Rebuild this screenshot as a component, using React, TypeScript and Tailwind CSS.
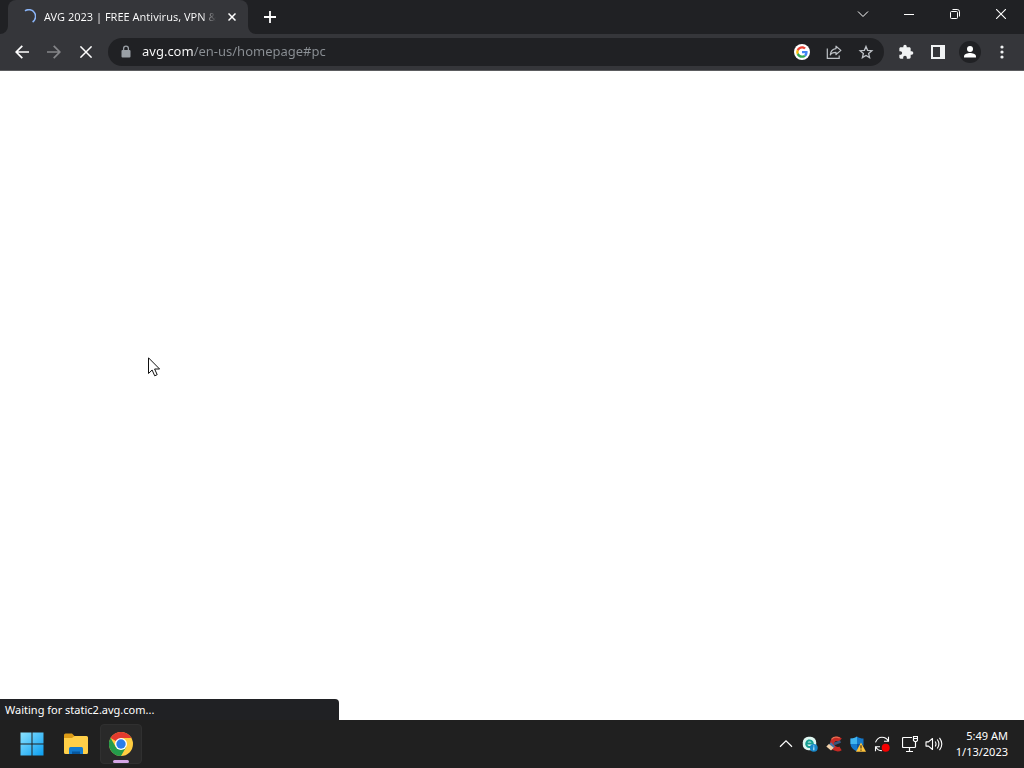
import type { ReactNode } from 'react';

const iconButton = 'flex h-7 w-7 shrink-0 items-center justify-center rounded-full hover:bg-white/10';
const windowButton = 'flex h-7 w-[46px] items-center justify-center text-white hover:bg-white/10';
const taskButton = 'relative flex h-10 w-10 items-center justify-center rounded hover:bg-white/5';
const trayButton = 'flex h-10 w-6 items-center justify-center rounded text-white hover:bg-white/5';

type ButtonProps = { label: string; className: string; children: ReactNode };

function Button({ label, className, children }: ButtonProps) {
  return (
    <button type="button" aria-label={label} className={className}>
      {children}
    </button>
  );
}

function TabStrip() {
  return (
    <div className="flex h-[34px] items-start bg-[#202124]">
      {/* Outward curves where the active tab meets the toolbar. */}
      <svg width="8" height="8" viewBox="0 0 8 8" className="shrink-0 self-end">
        <path d="M8 0v8H0a8 8 0 0 0 8-8z" fill="#35363a" />
      </svg>
      <div className="flex h-full w-60 items-center gap-2 rounded-t-lg bg-[#35363a] pr-2 pl-3">
        <svg width="16" height="16" viewBox="0 0 16 16" fill="none" className="shrink-0">
          <path d="M5 1.8A6.7 6.7 0 0 1 12.600 13" stroke="#8ab4f8" strokeWidth="1.6" />
        </svg>
        <span className="min-w-0 flex-1 bg-linear-to-r from-white from-92% to-transparent bg-clip-text text-[11px] whitespace-nowrap text-transparent">
          AVG 2023 | FREE Antivirus, VPN &amp;
        </span>
        <Button label="Close tab" className="flex h-4 w-4 shrink-0 items-center justify-center rounded-full text-white">
          <svg width="8" height="8" viewBox="0 0 8 8" stroke="currentColor" strokeWidth="1.5">
            <path d="M.5.5l7 7M7.5.5l-7 7" />
          </svg>
        </Button>
      </div>
      <svg width="8" height="8" viewBox="0 0 8 8" className="shrink-0 self-end">
        <path d="M0 0v8h8a8 8 0 0 1-8-8z" fill="#35363a" />
      </svg>
      <Button label="New tab" className="flex h-[34px] w-7 items-center justify-center text-white">
        <svg width="12" height="12" viewBox="0 0 12 12" stroke="currentColor" strokeWidth="1.8">
          <path d="M6 0v12M0 6h12" />
        </svg>
      </Button>
      <div className="ml-auto flex">
        <Button label="Search tabs" className={windowButton}>
          <svg width="12" height="12" viewBox="0 0 12 12" fill="none" stroke="currentColor">
            <path d="M1 3.5l5 5 5-5" />
          </svg>
        </Button>
        <Button label="Minimize" className={windowButton}>
          <svg width="10" height="10" viewBox="0 0 10 10" stroke="currentColor">
            <path d="M0 5.5h10" />
          </svg>
        </Button>
        <Button label="Restore" className={windowButton}>
          <svg width="10" height="10" viewBox="0 0 10 10" fill="none" stroke="currentColor">
            <rect x=".5" y="2.5" width="7" height="7" rx="1" />
            <path d="M2.5.5h4.7a2.3 2.3 0 0 1 2.3 2.3v4.7" />
          </svg>
        </Button>
        <Button label="Close" className={windowButton}>
          <svg width="10" height="10" viewBox="0 0 10 10" stroke="currentColor" strokeWidth="1.1">
            <path d="M0 0l10 10M10 0L0 10" />
          </svg>
        </Button>
      </div>
    </div>
  );
}

function AddressBar() {
  return (
    <div className="mx-1 flex h-7 min-w-0 flex-1 items-center gap-1 rounded-full bg-[#202124] pr-1 pl-3 text-[#bdc1c6]">
      <svg width="12" height="14" viewBox="0 0 12 14" fill="none" className="mr-1.5 shrink-0">
        <rect x="1.5" y="5" width="9" height="7.5" rx="1" fill="#9aa0a6" />
        <path d="M3.6 5V3.6a2.4 2.4 0 0 1 4.8 0V5" stroke="#9aa0a6" strokeWidth="1.3" />
      </svg>
      {/* The host is bright and the path is dimmed, split at the end of the host name. */}
      <input
        type="text"
        aria-label="Address and search bar"
        defaultValue="avg.com/en-us/homepage#pc"
        className="min-w-0 flex-1 bg-linear-to-r from-white from-[51px] to-[#8b9095] to-[51px] bg-clip-text text-[13px] text-transparent outline-none"
      />
      <Button label="Search with Google" className={iconButton}>
        <svg width="16" height="16" viewBox="0 0 48 48">
          <circle cx="24" cy="24" r="24" fill="#fff" />
          <g transform="translate(6.5 6.5) scale(.73)">
            <path fill="#ea4335" d="M24 9.5c3.54 0 6.71 1.22 9.21 3.6l6.85-6.85C35.9 2.38 30.47 0 24 0 14.62 0 6.51 5.38 2.56 13.22l7.98 6.19C12.43 13.72 17.74 9.5 24 9.5z" />
            <path fill="#4285f4" d="M46.98 24.55c0-1.57-.15-3.09-.38-4.55H24v9.02h12.94c-.58 2.96-2.26 5.48-4.78 7.18l7.73 6c4.51-4.18 7.09-10.36 7.09-17.65z" />
            <path fill="#fbbc05" d="M10.53 28.59a14.5 14.5 0 0 1 0-9.18l-7.98-6.19a24 24 0 0 0 0 21.56l7.98-6.19z" />
            <path fill="#34a853" d="M24 48c6.48 0 11.93-2.13 15.89-5.81l-7.73-6c-2.15 1.45-4.92 2.3-8.16 2.3-6.26 0-11.57-4.22-13.47-9.91l-7.98 6.19C6.51 42.62 14.62 48 24 48z" />
          </g>
        </svg>
      </Button>
      <Button label="Share this page" className={iconButton}>
        <svg width="16" height="16" viewBox="0 0 16 16" fill="none" stroke="currentColor" strokeWidth="1.2">
          <path d="M1.3 4.5v9.8h11.9v-2.8" />
          <path d="M10 2.2l4.9 4.2L10 10.5V8.3c-2.9 0-4.8.8-5.7 2.6.3-3.4 2.2-5.9 5.7-6.3z" strokeLinejoin="round" />
        </svg>
      </Button>
      <Button label="Bookmark this tab" className={iconButton}>
        <svg width="16" height="16" viewBox="0 0 16 16" fill="none" stroke="currentColor" strokeWidth="1.3">
          <path d="M8 2.4l1.6 3.9 4.3.4-3.300 2.800 1 4.100L8 11.400l-3.600 2.200 1-4.100-3.300-2.800 4.300-.4z" />
        </svg>
      </Button>
    </div>
  );
}

function Toolbar() {
  return (
    <div className="flex h-[37px] items-center gap-1 border-b border-[#5b5c5f] bg-[#35363a] px-2 text-white">
      <Button label="Back" className={iconButton}>
        <svg width="14" height="14" viewBox="0 0 14 14" fill="none" stroke="currentColor" strokeWidth="1.7">
          <path d="M14 7H1.5M7.3.8L1.2 7l6.1 6.2" />
        </svg>
      </Button>
      <Button label="Forward" className={`${iconButton} text-[#858689]`}>
        <svg width="14" height="14" viewBox="0 0 14 14" fill="none" stroke="currentColor" strokeWidth="1.7">
          <path d="M0 7h12.5M6.7.8L12.8 7l-6.1 6.2" />
        </svg>
      </Button>
      <Button label="Stop loading" className={iconButton}>
        <svg width="12" height="12" viewBox="0 0 12 12" stroke="currentColor" strokeWidth="1.5">
          <path d="M.4.4l11.2 11.2M11.6.4L.4 11.6" />
        </svg>
      </Button>
      <AddressBar />
      <Button label="Extensions" className={iconButton}>
        <svg width="16" height="16" viewBox="0 0 24 24" fill="#f1f3f4">
          <path d="M20.5 11H19V7c0-1.1-.9-2-2-2h-4V3.5a2.5 2.5 0 0 0-5 0V5H4c-1.1 0-1.99.9-1.99 2v3.8H3.5c1.49 0 2.7 1.21 2.7 2.7s-1.21 2.7-2.7 2.7H2V20c0 1.1.9 2 2 2h3.8v-1.5c0-1.49 1.21-2.7 2.7-2.7s2.7 1.21 2.7 2.7V22H17c1.1 0 2-.9 2-2v-4h1.5a2.5 2.5 0 0 0 0-5z" />
        </svg>
      </Button>
      <Button label="Side panel" className={iconButton}>
        <svg width="14" height="14" viewBox="0 0 14 14">
          <path fillRule="evenodd" fill="#f1f3f4" d="M0 0h14v14H0zM2 2v10h7V2z" />
        </svg>
      </Button>
      <Button label="Profile" className={iconButton}>
        <svg width="22" height="22" viewBox="0 0 22 22">
          <circle cx="11" cy="11" r="11" fill="#202124" />
          <circle cx="11" cy="7.9" r="3" fill="#fff" />
          <path d="M5 16.5v-1.3c0-2.2 3.8-3.2 6-3.2s6 1 6 3.2v1.3z" fill="#fff" />
        </svg>
      </Button>
      <Button label="Menu" className={iconButton}>
        <svg width="4" height="14" viewBox="0 0 4 14" fill="#f1f3f4">
          <circle cx="2" cy="2" r="1.6" />
          <circle cx="2" cy="7" r="1.6" />
          <circle cx="2" cy="12" r="1.6" />
        </svg>
      </Button>
    </div>
  );
}

function Tray() {
  return (
    <div className="flex items-center">
      <Button label="Show hidden icons" className={trayButton}>
        <svg width="14" height="14" viewBox="0 0 14 14" fill="none" stroke="currentColor" strokeWidth="1.2">
          <path d="M1 9.7l6-5.8 6 5.8" />
        </svg>
      </Button>
      <Button label="Security agent" className={trayButton}>
        <svg width="16" height="16" viewBox="0 0 16 16" fill="none">
          <rect x=".8" y=".8" width="13.4" height="13.4" rx="5.5" fill="#dff7f1" />
          <path d="M4.3 7.6h6.5a3.3 3.3 0 1 0-1 2.5" stroke="#159e91" strokeWidth="2" />
          <circle cx="11.8" cy="11.8" r="3.9" fill="#1687c9" />
          <path d="M11.8 9.5v1M11.8 11.2v3" stroke="#b9e7fa" strokeWidth="1.2" />
        </svg>
      </Button>
      <Button label="CCleaner" className={trayButton}>
        <svg width="16" height="16" viewBox="0 0 16 16" fill="none">
          <path d="M14.3 4.2C11.5 1.600 6.400 2.500 6.200 7.500c-.1 5.200 5.200 6.800 8.300 4.800" stroke="#c52a24" strokeWidth="4.4" />
          <path d="M5.500 3.300C7 1.400 10.500.7 13.800 2" stroke="#e76c50" strokeWidth="1.2" />
          <path d="M8 8l6.500-2.500" stroke="#38577d" strokeWidth="2.5" />
          <path d="M5.200 6.200l3.800 4.200-2.300 2.400-4-4.300z" fill="#4674a6" />
          <path d="M2.900 8.100l4.800 3.600-2.700 2.700L.3 10.400z" fill="#f1d0a9" />
        </svg>
      </Button>
      <Button label="Windows Security" className={trayButton}>
        <svg width="16" height="16" viewBox="0 0 16 16">
          <path d="M7 .5c1.9 1.4 4 2 6.5 2v4.900c0 3.900-2.900 6.300-6.500 7.900C3.400 13.700.5 11.300.5 7.400V2.500c2.500 0 4.600-.6 6.500-2z" fill="#1479cc" />
          <path d="M7 .5v7.400H.5V2.500c2.500 0 4.600-.6 6.500-2z" fill="#40b5ef" />
          <path d="M7 7.900h6.500c-.2 3.700-3 5.900-6.500 7.400z" fill="#0c57a4" />
          <path d="M11 6.500l5 9.300H6z" fill="#ffc33b" />
          <path d="M11 9.300v3.300M11 13.500v1.200" stroke="#463518" strokeWidth="1.2" />
        </svg>
      </Button>
      <Button label="Windows Update" className={trayButton}>
        <svg width="16" height="16" viewBox="0 0 16 16" fill="none" stroke="currentColor" strokeWidth="1.1">
          <path d="M1.5 6.4C2.7 2.9 5 1.2 8 1.2c3 0 5.1 1.5 6.300 3.800M14.500.8v4.500H10" />
          <path d="M1.5 15.200v-4.500H6M1.800 11c1.200 2.300 3.200 3.800 6.200 3.800" />
          <circle cx="11.7" cy="11.7" r="4" fill="#f50000" stroke="none" />
        </svg>
      </Button>
      <Button label="Network" className={`${trayButton} ml-1`}>
        <svg width="16" height="16" viewBox="0 0 16 16" fill="none" stroke="currentColor" strokeWidth="1.2">
          <path d="M10 1.5H1.5a1 1 0 0 0-1 1v8a1 1 0 0 0 1 1h11a1 1 0 0 0 1-1V6M4 15.500h7M7.500 11.500v4" />
          <path d="M11.5.5h4v4l-1 1h-2l-1-1zM11.5 2.500h4" />
        </svg>
      </Button>
      <Button label="Volume" className={trayButton}>
        <svg width="18" height="16" viewBox="0 0 18 16" fill="none" stroke="currentColor" strokeWidth="1.1">
          <path d="M1 5.900h2.500L7.500 2.500v11l-4-3.400H1z" strokeLinejoin="round" />
          <path d="M10.200 5.500q1.600 2.500 0 5M12.300 3.500q3.200 4.500 0 9M14.500 1.800q4.600 6.200 0 12.400" />
        </svg>
      </Button>
      <button type="button" className="h-10 pr-4 pl-2.5 text-right text-[11px] leading-4 text-white">
        <span className="block">5:49 AM</span>
        <span className="block">1/13/2023</span>
      </button>
    </div>
  );
}

function Taskbar() {
  return (
    <footer className="flex h-12 items-center justify-between bg-[#202020] pl-3">
      <nav aria-label="Taskbar" className="flex gap-1">
        <Button label="Start" className={taskButton}>
          <svg width="24" height="24" viewBox="0 0 24 24">
            <defs>
              <linearGradient id="win" x1="0" y1="0" x2="1" y2="1">
                <stop offset="0" stopColor="#8be2ff" />
                <stop offset="1" stopColor="#0a9df0" />
              </linearGradient>
            </defs>
            <path fill="url(#win)" d="M.5.5h11v11H.5zM12.5.5h11v11h-11zM.5 12.5h11v11H.5zM12.5 12.5h11v11h-11z" />
          </svg>
        </Button>
        <Button label="File Explorer" className={taskButton}>
          <svg width="24" height="24" viewBox="0 0 24 24">
            <path d="M0 3a1.500 1.500 0 0 1 1.500-1.500H8L10.500 4v4H0z" fill="#dc9b16" />
            <path d="M0 6h8l2.500-2h12A1.500 1.500 0 0 1 24 5.500v15a1.500 1.500 0 0 1-1.500 1.500h-21A1.500 1.500 0 0 1 0 20.500z" fill="#ffcf48" />
            <path d="M5 22v-5.500A1.500 1.500 0 0 1 6.500 15h11a1.500 1.500 0 0 1 1.500 1.500V22z" fill="#127bd0" />
            <path d="M8 22v-2.500h8V22z" fill="#07579e" />
          </svg>
        </Button>
        <button
          type="button"
          aria-label="Google Chrome"
          className="relative flex h-10 w-[42px] items-center justify-center rounded border border-[#303030] bg-[#292929]"
        >
          <svg width="24" height="24" viewBox="0 0 24 24">
            <circle cx="12" cy="12" r="12" fill="#ffcd40" />
            <path d="M12 12L1.600 6A12 12 0 0 1 22.400 6H12z" fill="#e33b2e" />
            <path d="M1.600 6A12 12 0 0 0 12 24l5.200-9L12 12 6.800 15z" fill="#249b4b" />
            <circle cx="12" cy="12" r="6" fill="#fff" />
            <circle cx="12" cy="12" r="4.7" fill="#2a7de9" />
          </svg>
          <span className="absolute bottom-0 h-[3px] w-4 rounded-full bg-[#d5a6e6]" />
        </button>
      </nav>
      <Tray />
    </footer>
  );
}

export default function App() {
  return (
    <div className="flex min-h-screen flex-col bg-white font-['Noto_Sans','Open_Sans',sans-serif]">
      <header>
        <TabStrip />
        <Toolbar />
      </header>
      <main className="relative flex flex-1 flex-col justify-end">
        <svg width="13" height="20" viewBox="0 0 13 20" className="absolute top-[286px] left-[148px]">
          <path d="M.5.8v15.700l3.600-3.500 2.600 5.800 2.500-1.100-2.600-5.700h5z" fill="#fff" stroke="#111" />
        </svg>
        <div role="status" className="h-[21px] w-[33%] min-w-[339px] self-start rounded-tr bg-[#202124] pl-[5px] text-[11px] leading-[21px] text-white">
          Waiting for static2.avg.com...
        </div>
      </main>
      <Taskbar />
    </div>
  );
}
